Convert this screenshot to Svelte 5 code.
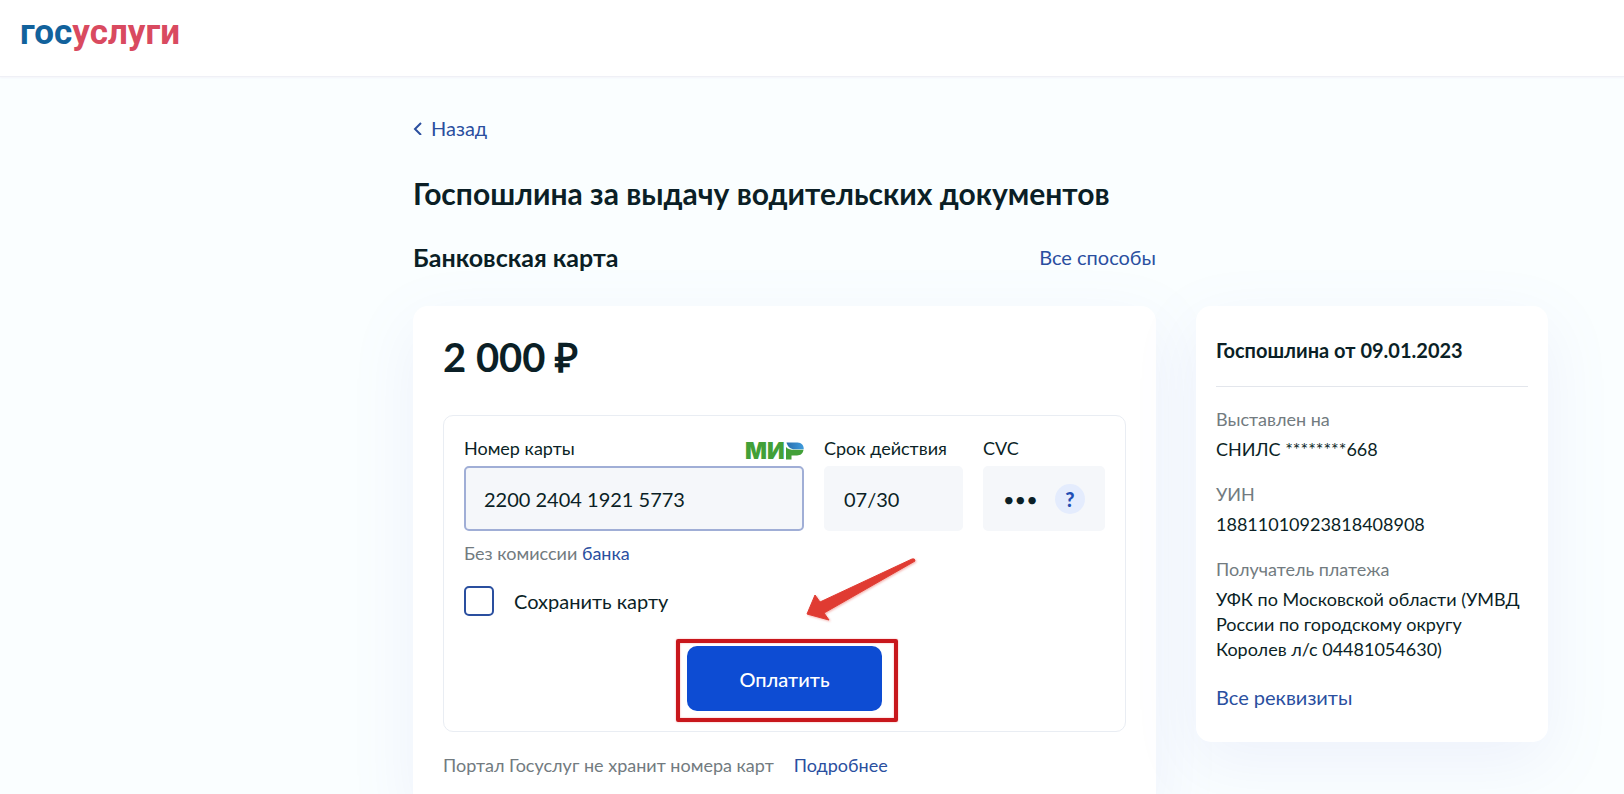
<script lang="ts">
  interface Detail {
    label: string;
    value: string;
  }

  let cardNumber = $state("2200 2404 1921 5773");
  let expiry = $state("07/30");
  let cvc = $state("668");
  let saveCard = $state(false);

  const details: Detail[] = [
    { label: "Выставлен на", value: "СНИЛС ********668" },
    { label: "УИН", value: "18811010923818408908" },
    {
      label: "Получатель платежа",
      value: "УФК по Московской области (УМВД России по городскому округу Королев л/с 04481054630)"
    }
  ];
</script>

<div class="page">
  <header class="header">
    <a class="logo" href="/" aria-label="госуслуги"><span class="logoBlue">гос</span><span class="logoRed">услуги</span></a>
  </header>

  <main class="content">
    <a class="back" href="/">
      <svg width="9" height="14" viewBox="0 0 9 14" aria-hidden="true">
        <path d="M8 2 2 8l6 6" fill="none" stroke="currentColor" stroke-width="2" />
      </svg>
      Назад
    </a>
    <h1>Госпошлина за выдачу водительских документов</h1>

    <div class="columns">
      <section>
        <div class="methodRow">
          <h2>Банковская карта</h2>
          <a href="/methods">Все способы</a>
        </div>

        <div class="panel payment">
          <div class="amount">2 000 ₽</div>

          <form class="cardForm" onsubmit={(e) => e.preventDefault()}>
            <div class="fields">
              <div class="field number">
                <label for="number">Номер карты</label>
                <svg class="mir" width="60" height="20" viewBox="0 0 60 20" role="img" aria-label="МИР">
                  <defs>
                    <linearGradient id="mirBlue" x1="0" x2="1">
                      <stop offset="0" stop-color="#2a6fae" />
                      <stop offset="1" stop-color="#3f9bdc" />
                    </linearGradient>
                  </defs>
                  <text x="1" y="18" class="mirText">МИ</text>
                  <path d="M42 6C44 8.500 47 8.800 50 8.800H59.500C59 12.500 56.500 14.500 53 14.500H47.500V18.500H42Z" fill="#42a038" />
                  <path d="M42.500 1.500H53.500C57.500 1.500 60 4.500 59.700 8.300H50.500C46.500 8.300 43.500 5.500 42.500 1.500Z" fill="url(#mirBlue)" />
                </svg>
                <input id="number" class="active" type="text" bind:value={cardNumber} />
              </div>
              <div class="field expiry">
                <label for="expiry">Срок действия</label>
                <input id="expiry" type="text" bind:value={expiry} />
              </div>
              <div class="field cvc">
                <label for="cvc">CVC</label>
                <input id="cvc" type="password" bind:value={cvc} />
                <button class="hint" type="button">?</button>
              </div>
            </div>

            <p class="commission">Без комиссии <a href="/bank">банка</a></p>

            <label class="save">
              <input type="checkbox" bind:checked={saveCard} />
              Сохранить карту
            </label>

            <div class="payWrap">
              <button class="pay" type="submit">Оплатить</button>
              <svg class="arrow" width="112" height="66" viewBox="0 0 112 66" aria-hidden="true">
                <path
                  d="M2 57 10 38 15 45 107 2Q110 1 110 4L19 56 24 63Z"
                  fill="#e03b32"
                  stroke="#e03b32"
                  stroke-width="1"
                  stroke-linejoin="round"
                />
              </svg>
            </div>
          </form>

          <p class="notice">
            <span>Портал Госуслуг не хранит номера карт</span>
            <a href="/about">Подробнее</a>
          </p>
        </div>
      </section>

      <aside class="panel summary">
        <h3>Госпошлина от 09.01.2023</h3>
        <dl>
          {#each details as item}
            <dt>{item.label}</dt>
            <dd>{item.value}</dd>
          {/each}
        </dl>
        <a class="allDetails" href="/details">Все реквизиты</a>
      </aside>
    </div>
  </main>
</div>

<style>
  :global(body) {
    background: #fafeff;
  }

  .page {
    height: 100vh;
    overflow: hidden auto;
    scrollbar-width: none;
    font-family: Lato, "Open Sans", sans-serif;
    font-size: 20px;
    line-height: 30px;
    color: #0b1f26;
    background: #fafeff;
  }

  .page * {
    box-sizing: border-box;
  }

  a {
    color: #2a4f9f;
    text-decoration: none;
  }

  h1,
  h2,
  h3,
  p,
  dl,
  dd {
    margin: 0;
  }

  .header {
    height: 77px;
    padding: 13px 20px;
    background: #fff;
    border-bottom: 1px solid #eff0f6;
    box-shadow: 0 1px 2px #f3f4fa;
  }

  .logo {
    font-family: Roboto, "Open Sans", sans-serif;
    font-size: 35px;
    font-weight: 700;
    line-height: 40px;
  }

  .logoBlue {
    color: #12629c;
  }

  .logoRed {
    color: #d94a60;
  }

  .content {
    padding: 36px 76px 30px 413px;
  }

  .back {
    display: flex;
    align-items: center;
    gap: 9px;
    width: max-content;
  }

  h1 {
    margin-top: 30px;
    font-size: 30px;
    font-weight: 700;
    line-height: 40px;
  }

  .columns {
    display: grid;
    grid-template-columns: minmax(0, 1fr) 352px;
    column-gap: 40px;
    align-items: start;
    margin-top: 29px;
  }

  .methodRow {
    display: flex;
    justify-content: space-between;
    align-items: center;
    margin-bottom: 34px;
  }

  h2 {
    font-size: 25px;
    font-weight: 700;
    line-height: 30px;
  }

  .panel {
    background: #fff;
    border-radius: 15px;
    box-shadow: 0 20px 65px rgba(130, 130, 220, 0.1);
  }

  .payment {
    padding: 29px 30px 30px;
  }

  .amount {
    font-size: 40px;
    font-weight: 700;
    line-height: 45px;
  }

  .cardForm {
    margin-top: 35px;
    padding: 20px;
    border: 1px solid #e9edf3;
    border-radius: 10px;
  }

  .fields {
    display: flex;
    gap: 20px;
  }

  .field {
    position: relative;
    font-size: 18px;
    line-height: 25px;
  }

  .number {
    flex: 1;
  }

  .expiry {
    width: 139px;
  }

  .cvc {
    width: 122px;
  }

  .field label {
    display: block;
    margin-bottom: 5px;
  }

  .field input {
    display: block;
    width: 100%;
    height: 65px;
    padding: 0 18px;
    border: 2px solid #f5f7fa;
    border-radius: 5px;
    background: #f5f7fa;
    color: inherit;
    font-family: inherit;
    font-size: 20px;
    outline: none;
  }

  .field input.active {
    border-color: #a0aed6;
  }

  .mir {
    position: absolute;
    top: 5px;
    right: 0;
    overflow: visible;
  }

  .mirText {
    font-family: Inter, sans-serif;
    font-size: 23px;
    font-weight: 900;
    fill: #42a038;
  }

  .hint {
    position: absolute;
    right: 20px;
    bottom: 17px;
    width: 30px;
    height: 30px;
    padding: 0;
    border: 0;
    border-radius: 50%;
    background: #e4ecfd;
    color: #1f4fb5;
    font-family: inherit;
    font-size: 20px;
    font-weight: 900;
    line-height: 30px;
  }

  .commission {
    margin-top: 10px;
    font-size: 18px;
    line-height: 25px;
    color: #727b80;
  }

  .save {
    display: flex;
    align-items: center;
    gap: 20px;
    width: max-content;
    margin-top: 20px;
  }

  .save input {
    appearance: none;
    width: 30px;
    height: 30px;
    margin: 0;
    border: 2px solid #2a4f9f;
    border-radius: 5px;
    background: #fff;
  }

  .save input:checked {
    background: #2a4f9f;
  }

  .payWrap {
    position: relative;
    width: 195px;
    margin: 30px auto 0;
  }

  /* red frame around the pay button */
  .payWrap::after {
    content: "";
    position: absolute;
    inset: -7px -16px -11px -11px;
    border: 4px solid #c8171c;
    border-radius: 2px;
    box-shadow: 0 0 2px #f5a5a5, inset 0 0 2px #f5a5a5;
    pointer-events: none;
  }

  .pay {
    display: block;
    width: 100%;
    height: 65px;
    border: 0;
    border-radius: 10px;
    background: #0d4cd3;
    color: #fff;
    font-family: inherit;
    font-size: 20px;
    font-weight: 500;
    cursor: pointer;
  }

  .arrow {
    position: absolute;
    left: 118px;
    bottom: 88px;
    filter: drop-shadow(1px 1px 1px rgba(224, 59, 50, 0.4));
  }

  .notice {
    display: flex;
    gap: 20px;
    margin-top: 21px;
    font-size: 18px;
    line-height: 25px;
    color: #727b80;
  }

  .summary {
    margin-top: 64px;
    padding: 29px 20px 30px;
  }

  h3 {
    padding-bottom: 21px;
    border-bottom: 1px solid #e3e6ec;
    font-size: 20px;
    font-weight: 700;
    line-height: 30px;
  }

  dl {
    font-size: 18px;
    line-height: 25px;
  }

  dt {
    margin: 20px 0 5px;
    color: #727b80;
  }

  .allDetails {
    display: block;
    margin-top: 20px;
  }
</style>
